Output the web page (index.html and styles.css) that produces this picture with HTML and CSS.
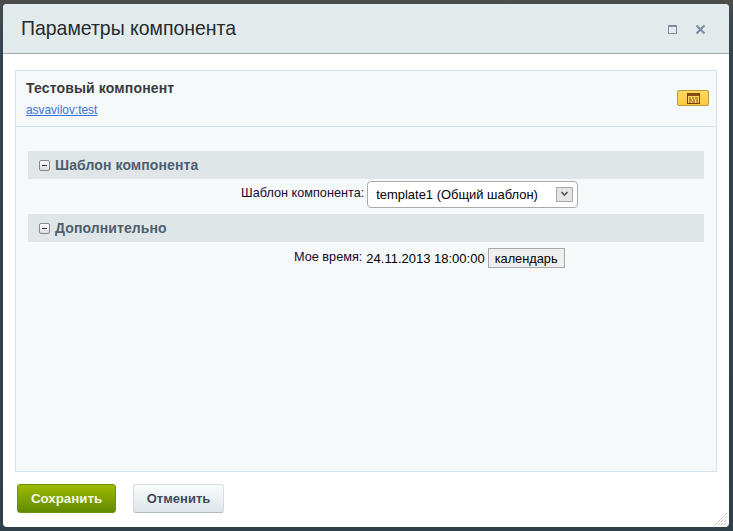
FILE: index.html
```html
<!DOCTYPE html>
<html lang="ru">
<head>
<meta charset="utf-8">
<title>Параметры компонента</title>
<link rel="stylesheet" href="styles.css">
</head>
<body>
<div class="dialog">
  <header class="head">
    <h1 class="title">Параметры компонента</h1>
    <div class="win-btns">
      <span class="win-max"></span>
      <svg class="win-close" width="11" height="11" viewBox="0 0 11 11"><path d="M1.5 1.5l8 8M9.5 1.5l-8 8" stroke="#7d8da3" stroke-width="2.2" fill="none"/></svg>
    </div>
  </header>
  <main class="body">
    <div class="panel">
      <div class="panel-head">
        <div class="comp">
          <div class="comp-name">Тестовый компонент</div>
          <a class="comp-link" href="#">asvavilov:test</a>
        </div>
        <span class="tpl-btn">
          <svg width="13" height="11" viewBox="0 0 13 11"><rect x=".5" y=".5" width="12" height="10" fill="#fcd560" stroke="#7a3f08"/><rect x="1" y="1" width="11" height="2" fill="#8a4a10"/><path d="M2 5h2M5 5h2M8 5h3M2 7h3M6 7h2M9 7h2M2 9h2M5 9h3M9 9h2" stroke="#8a4a10"/></svg>
        </span>
      </div>
      <div class="panel-body">
        <section class="group">
          <h2 class="group-head"><span class="toggle"></span>Шаблон компонента</h2>
          <div class="row row-select">
            <span class="label">Шаблон компонента:</span>
            <div class="select">
              <span class="select-text">template1 (Общий шаблон)</span>
              <span class="select-arrow"><svg width="9" height="6" viewBox="0 0 9 6"><path d="M1.5 1l3 3 3-3" stroke="#555" stroke-width="1.6" fill="none"/></svg></span>
            </div>
          </div>
        </section>
        <section class="group">
          <h2 class="group-head"><span class="toggle"></span>Дополнительно</h2>
          <div class="row row-date">
            <span class="label">Мое время:</span>
            <span class="value">24.11.2013 18:00:00</span>
            <button class="cal-btn" type="button">календарь</button>
          </div>
        </section>
      </div>
    </div>
  </main>
  <footer class="foot">
    <button class="btn btn-save" type="button">Сохранить</button>
    <button class="btn btn-cancel" type="button">Отменить</button>
    <svg class="grip" width="12" height="12" viewBox="0 0 12 12"><path d="M0 12L12 0M3 12L12 3M6 12L12 6M9 12L12 9" stroke="#999" stroke-dasharray="1 1" fill="none"/></svg>
  </footer>
</div>
</body>
</html>
```

FILE: styles.css
```css
* { box-sizing: border-box; }
html, body { margin: 0; height: 100%; }
body {
  width: 733px;
  height: 531px;
  overflow: hidden;
  padding: 4px 4px 4px 3px;
  background: linear-gradient(#4b4d49 0, #3f4a50 14px, #33434e 60px, #2f3f4a 100%);
  font-family: "Liberation Sans", Arial, sans-serif;
}
.dialog {
  width: 726px;
  height: 523px;
  background: #fff;
  border-radius: 4px;
  display: flex;
  flex-direction: column;
  overflow: hidden;
}
.head {
  height: 50px;
  flex: none;
  background: #e2eaec;
  border-bottom: 1px solid #a4a9ab;
  display: flex;
  align-items: center;
  justify-content: space-between;
  padding: 0 23px 0 18px;
}
.title {
  margin: 0;
  font-weight: 400;
  font-size: 19.45px;
  color: #262b2e;
  padding-bottom: 1px;
}
.win-btns { display: flex; align-items: center; gap: 18px; padding-top: 1px; }
.win-max {
  width: 9px;
  height: 9px;
  border: 1px solid #7d8da3;
  border-top-width: 2px;
}
.win-close { display: block; }
.body {
  flex: 1;
  padding: 16px 12px 0 12px;
  display: flex;
  min-height: 0;
}
.panel {
  flex: 1;
  border: 1px solid #d7e3ec;
  background: #f5f9f9;
  display: flex;
  flex-direction: column;
}
.panel-head {
  height: 56px;
  flex: none;
  border-bottom: 1px solid #d7e3ec;
  display: flex;
  align-items: flex-start;
  justify-content: space-between;
  padding: 9px 7px 0 10px;
}
.comp-name {
  font-size: 14px;
  letter-spacing: .15px;
  font-weight: 700;
  line-height: 16px;
  color: #3b3b3b;
}
.comp-link {
  display: block;
  margin-top: 7px;
  font-size: 11.9px;
  line-height: 14px;
  color: #3a6fd8;
  text-decoration: underline;
}
.tpl-btn {
  margin-top: 10px;
  width: 32px;
  height: 16px;
  background: linear-gradient(#fedb62, #fcc93c);
  border: 1px solid #bb9a39;
  border-radius: 2px;
  display: flex;
  align-items: center;
  justify-content: center;
}
.tpl-btn svg { display: block; }
.panel-body { padding: 24px 12px 0; }
.group-head {
  margin: 0;
  height: 28px;
  background: #e0e6e8;
  display: flex;
  align-items: center;
  padding-left: 11px;
  font-size: 14px;
  letter-spacing: .1px;
  font-weight: 700;
  color: #4c606e;
}
.toggle {
  width: 11px;
  height: 11px;
  margin-right: 5px;
  border: 1px solid #888;
  border-radius: 2px;
  background: linear-gradient(#fff, #dcdcdc);
  position: relative;
}
.toggle::after {
  content: "";
  position: absolute;
  left: 2px;
  top: 4px;
  width: 5px;
  height: 1px;
  background: #333;
}
.row {
  display: flex;
  align-items: center;
  font-size: 12.7px;
  color: #000;
}
.row-select { height: 35px; padding-left: 213px; padding-bottom: 5px; }
.row-date { height: 30px; padding-left: 266px; padding-top: 2px; }
.label { margin-right: 3px; color: #1a0a33; position: relative; top: -1px; }
.row-date .label { margin-right: 4px; }
.select {
  width: 211px;
  height: 27px;
  border: 1px solid #aaa;
  border-radius: 4px;
  background: #fff;
  display: flex;
  align-items: center;
  justify-content: space-between;
  padding: 0 4px 0 8px;
  font-size: 12.95px;
}
.select-arrow {
  width: 17px;
  height: 15px;
  border: 1px solid #aaa;
  background: #e4e4e4;
  display: flex;
  align-items: center;
  justify-content: center;
}
.value { font-size: 13px; margin-right: 3px; }
.cal-btn {
  width: 77px;
  height: 20px;
  padding: 0;
  border: 1px solid #a9a9a9;
  background: #efefef;
  font: 12.8px "Liberation Sans", Arial, sans-serif;
  color: #000;
}
.foot {
  height: 55px;
  flex: none;
  padding: 12px 0 0 14px;
  display: flex;
  align-items: flex-start;
  gap: 17px;
  position: relative;
}
.btn {
  height: 29px;
  border-radius: 3px;
  font: 700 13px "Liberation Sans", Arial, sans-serif;
  padding: 0;
}
.btn-save {
  width: 99px;
  border: 1px solid #6f9300;
  color: #f3f8e0;
  font-size: 13.3px;
  background: linear-gradient(#9cbb00, #628a00);
}
.btn-cancel {
  width: 91px;
  border: 1px solid #d6dcdf;
  border-bottom-color: #b0b8bc;
  color: #3f4c58;
  background: linear-gradient(#fafcfc, #dde6ea);
}
.grip { position: absolute; right: 2px; bottom: 2px; }
```
